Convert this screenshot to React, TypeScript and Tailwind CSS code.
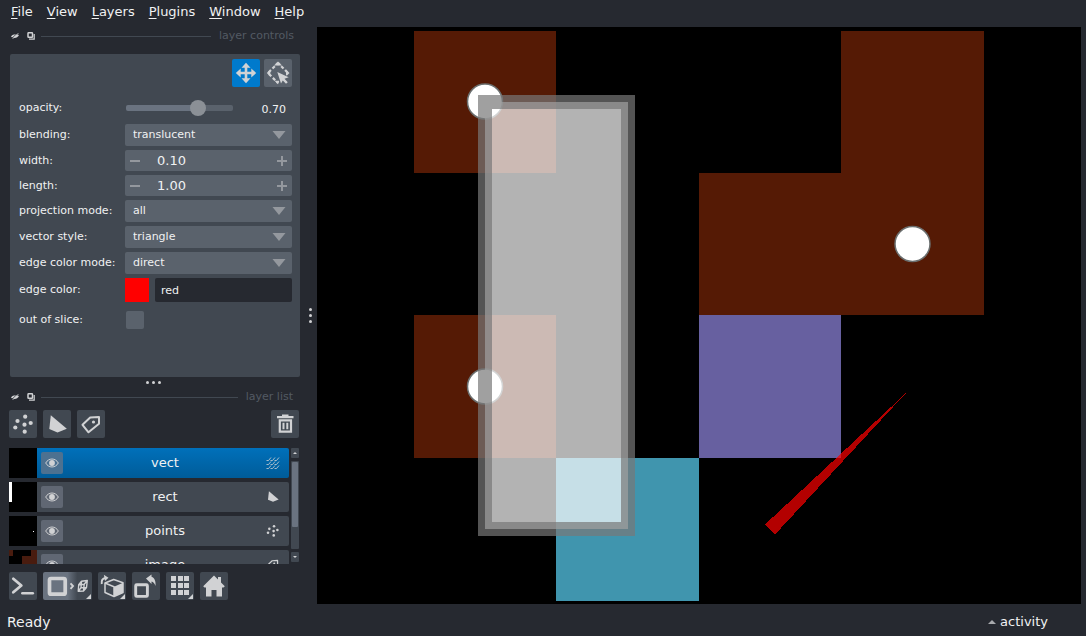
import { useState } from "react";
import type { ReactNode } from "react";

const INK = "#d1d2d4";

function Icon({ children, w = 28, h = 28 }: { children: ReactNode; w?: number; h?: number }) {
  return (
    <svg width={w} height={h} viewBox={`0 0 ${w} ${h}`} fill={INK} className="block shrink-0" aria-hidden="true">
      {children}
    </svg>
  );
}

function ToolButton({ label, className = "bg-[#414851]", children }: { label: string; className?: string; children: ReactNode }) {
  return (
    <button type="button" aria-label={label} className={`block h-7 shrink-0 rounded-[2px] ${className}`}>
      {children}
    </button>
  );
}

const Corner = () => <path d="M27 22v5h-5z" />;

function DockTitle({ title }: { title: string }) {
  return (
    <div className="flex items-center pr-[6px] pl-[2px] text-[11px] leading-[18px] text-[#535a63]">
      <button type="button" aria-label={`hide ${title}`}>
        <Icon w={8} h={8}>
          <path d="M0 4.500C1.500 2.200 5 1.400 8 3 6.500 6 2.800 7 0 4.500z" />
          <path d="M.7 6.500L6.500 1" stroke="#262930" strokeWidth=".8" />
          <path d="M1.500 7L7.500 1" stroke={INK} strokeWidth=".7" />
        </Icon>
      </button>
      <button type="button" aria-label={`float ${title}`} className="mr-[6px] ml-2">
        <Icon w={8} h={8}>
          <rect x="1" y=".8" width="4.500" height="4.500" rx=".6" fill="none" stroke={INK} strokeWidth="1.500" />
          <path d="M7.200 2v5.200H2" fill="none" stroke={INK} strokeWidth="1.200" />
        </Icon>
      </button>
      <span className="mr-2 h-px flex-1 bg-[#414851]" />
      <h2>{title}</h2>
    </div>
  );
}

function Row({ id, label, children, height = "" }: { id: string; label: string; children: ReactNode; height?: string }) {
  return (
    <div className={`flex items-center ${height}`}>
      <label htmlFor={id} className="w-[106px] shrink-0">
        {label}
      </label>
      {children}
    </div>
  );
}

function Select({ id, value }: { id: string; value: string }) {
  return (
    <div className="relative flex-1">
      <select id={id} defaultValue={value} className="block h-[22px] w-full appearance-none rounded-[2px] bg-[#5a626c] pr-6 pl-2">
        <option>{value}</option>
      </select>
      <svg width="14" height="8" viewBox="0 0 14 8" className="pointer-events-none absolute top-[7px] right-[6px]" aria-hidden="true">
        <path d="M.5 0h13L7 8z" fill="#94989e" />
      </svg>
    </div>
  );
}

function Spin({ id, initial }: { id: string; initial: number }) {
  const [value, setValue] = useState(initial);
  return (
    <div className="flex h-[21px] min-w-0 flex-1 items-center rounded-[2px] bg-[#5a626c]">
      <button type="button" aria-label="decrease" className="w-5 pl-[5px]" onClick={() => setValue(value - 0.1)}>
        <Icon w={10} h={10}>
          <path d="M0 4h10v2H0z" fill="#94989e" />
        </Icon>
      </button>
      <input
        id={id}
        value={value.toFixed(2)}
        onChange={(e) => setValue(Number(e.target.value) || 0)}
        className="min-w-0 flex-1 bg-transparent pl-3 text-[13px] leading-5 outline-none"
      />
      <button type="button" aria-label="increase" className="w-5 pl-[5px]" onClick={() => setValue(value + 0.1)}>
        <Icon w={10} h={10}>
          <path d="M0 4h4V0h2v4h4v2H6v4H4V6H0z" fill="#94989e" />
        </Icon>
      </button>
    </div>
  );
}

const PointDots = () => (
  <>
    <circle cx="16.200" cy="6.700" r="2.100" />
    <circle cx="8.500" cy="11" r="2.100" />
    <circle cx="21.700" cy="13" r="2.100" />
    <circle cx="15.500" cy="14.700" r="2.100" />
    <circle cx="6.300" cy="17.500" r="2.100" />
    <circle cx="15.700" cy="21.700" r="2.100" />
  </>
);

const Tag = () => (
  <>
    <path d="M5.500 14.800L13.200 7.500 22 7 22 13.800 11.500 22.300z" fill="none" stroke={INK} strokeWidth="2" strokeLinejoin="round" />
    <circle cx="16.500" cy="12" r="1.600" />
  </>
);

const PolyShape = () => <path d="M7.800 5.200L23.800 18.700 14.500 22.500 6.300 19z" />;

function Small({ children }: { children: ReactNode }) {
  return (
    <svg width="14" height="14" viewBox="3 3 23 23" fill={INK} className="block shrink-0" aria-hidden="true">
      {children}
    </svg>
  );
}

const layers = [
  {
    name: "vect",
    selected: true,
    thumb: null,
    icon: (
      <Icon w={14} h={14}>
        <path
          d="M.5 4.500h2L5 1.500M4.500 4.500h2L9 1.500M8.500 4.500h2L13 1.500M.5 8.500h2L5 5.500M4.500 8.500h2L9 5.500M8.500 8.500h2L13 5.500M.5 12.500h2L5 9.500M4.500 12.500h2L9 9.500M8.500 12.500h2L13 9.500"
          stroke={INK}
          strokeWidth=".8"
          fill="none"
        />
      </Icon>
    ),
  },
  { name: "rect", selected: false, thumb: <rect width="3" height="20" fill="#fff" />, icon: <Small><PolyShape /></Small> },
  { name: "points", selected: false, thumb: <rect x="24" y="15" width="1" height="1" fill="#fff" />, icon: <Small><PointDots /></Small> },
  { name: "image", selected: false, thumb: <path d="M0 0h4v6H0zM22 0h6v18H13V6h9z" fill="#491c0f" />, icon: <Small><Tag /></Small> },
];

function LayerItem({ layer }: { layer: (typeof layers)[number] }) {
  return (
    <li className="flex h-[30px] shrink-0">
      <svg width="28" height="30" viewBox="0 0 28 30" className="shrink-0 bg-black" aria-hidden="true">
        {layer.thumb}
      </svg>
      <div
        className={`flex flex-1 items-center rounded-r-[2px] pr-[9px] pl-1 ${
          layer.selected ? "bg-linear-to-b from-[#0070ba] to-[#005c99]" : "bg-[#414851]"
        }`}
      >
        <button
          type="button"
          aria-label={`toggle ${layer.name}`}
          className={`flex size-[22px] items-center justify-center rounded-[2px] ${layer.selected ? "bg-[#4d7190]" : "bg-[#606773]"}`}
        >
          <Icon w={14} h={10}>
            <path d="M.7 5C3.500-.3 10.500-.3 13.300 5 10.500 10.300 3.500 10.300.7 5z" fill="none" stroke={INK} strokeWidth="1" />
            <circle cx="7" cy="5" r="2.900" />
          </Icon>
        </button>
        <span className="flex-1 pl-px text-center text-[13px] leading-5">{layer.name}</span>
        {layer.icon}
      </div>
    </li>
  );
}

function Scene() {
  return (
    <svg viewBox="0 0 764 577" className="block h-full w-full" role="img" aria-label="canvas" shapeRendering="crispEdges">
      <path d="M97 4h142v142H97zM97 288h142v143H97zM524 4h143v284H382V146h142z" fill="#551a05" />
      <rect x="382" y="288" width="142" height="143" fill="#6760a0" />
      <rect x="239" y="431" width="143" height="143" fill="#4095ae" />
      <g fill="#fff" stroke="#6b6f6f" strokeWidth="1.500" shapeRendering="auto">
        <circle cx="168" cy="74.500" r="17.500" />
        <circle cx="595.500" cy="217" r="17.500" />
        <circle cx="168" cy="359.500" r="17.500" />
      </g>
      <rect x="168" y="75" width="143" height="427" fill="#fff" fillOpacity=".7" />
      <rect x="168" y="75" width="143" height="427" fill="none" stroke="#777" strokeOpacity=".7" strokeWidth="14" />
      <path d="M589 366L448 497.500 458 507.500z" fill="#f00" fillOpacity=".7" />
    </svg>
  );
}

export default function App() {
  const [opacity, setOpacity] = useState(0.7);
  return (
    <div className="flex h-screen flex-col overflow-hidden bg-[#262930] font-['DejaVu_Sans',sans-serif] text-[#f0f1f2]">
      <nav className="flex h-[27px] shrink-0 gap-[14px] px-[11px] text-[13px] leading-6">
        {["File", "View", "Layers", "Plugins", "Window", "Help"].map((m) => (
          <button type="button" key={m} className="h-6">
            <span className="underline underline-offset-2">{m[0]}</span>
            {m.slice(1)}
          </button>
        ))}
      </nav>

      <main className="flex min-h-0 flex-1">
        <aside className="flex w-[303px] shrink-0 flex-col pr-[3px] pl-[9px]">
          <section className="shrink-0">
            <DockTitle title="layer controls" />
            <form className="mt-[9px] ml-px flex flex-col gap-1 rounded-[2px] bg-[#414851] pt-[5px] pr-2 pb-[43px] pl-[9px] text-[11px] leading-[18px]">
              <div className="mb-1 flex justify-end gap-1">
                <ToolButton label="pan/zoom" className="bg-[#007acc]">
                  <Icon>
                    <path d="M14 7v14M7 14h14" stroke={INK} strokeWidth="2.600" />
                    <path d="M14 3.800l4.500 4.900h-9zM14 24.200l4.500-4.900h-9zM3.800 14l4.900-4.500v9zM24.200 14l-4.900-4.500v9z" />
                  </Icon>
                </ToolButton>
                <ToolButton label="transform" className="bg-[#5a626c]">
                  <Icon>
                    <path d="M14 4L24 14M14 4L4 14 14 24" fill="none" stroke={INK} strokeWidth="2.200" strokeDasharray="3.300 2.200" strokeDashoffset="1" />
                    <path d="M14 2.500l4 4h-8zM2.800 14l3.500-3.500v7zM25.500 14l-3.500-3.500v7zM14 25.300l-3.500-3.500h5z" />
                    <path d="M12.500 12L26 18l-5 2.200 3 3.300-2.500 2.200-3-3-2 3z" fill="#5a626c" />
                    <path d="M13.300 13L24.700 18.200 20.500 19.800 23.800 23.200 22 24.800 18.800 21.400 17 24.500z" />
                  </Icon>
                </ToolButton>
              </div>
              <Row id="opacity" label="opacity:" height="h-[25px]">
                <input
                  id="opacity"
                  type="range"
                  min="0"
                  max="1"
                  step="0.01"
                  value={opacity}
                  onChange={(e) => setOpacity(Number(e.target.value))}
                  className="mr-auto ml-px block h-[6px] w-[107px] appearance-none rounded-[2px] [&::-webkit-slider-thumb]:size-4 [&::-webkit-slider-thumb]:appearance-none [&::-webkit-slider-thumb]:rounded-full [&::-webkit-slider-thumb]:bg-[#8b9096]"
                  style={{ background: `linear-gradient(to right, #6a7380 ${opacity * 100}%, #5a626c ${opacity * 100}%)` }}
                />
                <output htmlFor="opacity" className="pt-[5px] pr-[6px]">
                  {opacity.toFixed(2)}
                </output>
              </Row>
              <Row id="blending" label="blending:">
                <Select id="blending" value="translucent" />
              </Row>
              <Row id="width" label="width:">
                <Spin id="width" initial={0.1} />
              </Row>
              <Row id="length" label="length:">
                <Spin id="length" initial={1} />
              </Row>
              <Row id="projection" label="projection mode:">
                <Select id="projection" value="all" />
              </Row>
              <Row id="style" label="vector style:">
                <Select id="style" value="triangle" />
              </Row>
              <Row id="mode" label="edge color mode:">
                <Select id="mode" value="direct" />
              </Row>
              <Row id="color" label="edge color:">
                <button type="button" aria-label="pick edge color" className="mr-[6px] size-6 shrink-0 bg-[#ff0000]" />
                <input id="color" defaultValue="red" className="h-6 min-w-0 flex-1 rounded-[2px] bg-[#262930] px-[6px]" />
              </Row>
              <Row id="slice" label="out of slice:" height="h-7">
                <input id="slice" type="checkbox" className="ml-px size-[18px] appearance-none rounded-[2px] bg-[#5a626c]" />
              </Row>
            </form>
          </section>

          <div className="flex h-[11px] shrink-0 items-center justify-center gap-[3px] pr-[2px]">
            <i className="size-[3px] rounded-full bg-[#d1d2d4]" />
            <i className="size-[3px] rounded-full bg-[#d1d2d4]" />
            <i className="size-[3px] rounded-full bg-[#d1d2d4]" />
          </div>

          <section className="flex min-h-0 flex-1 flex-col pr-px">
            <DockTitle title="layer list" />
            <div className="mt-1 flex gap-[6px]">
              <ToolButton label="new points layer">
                <Icon>
                  <PointDots />
                </Icon>
              </ToolButton>
              <ToolButton label="new shapes layer">
                <Icon>
                  <PolyShape />
                </Icon>
              </ToolButton>
              <ToolButton label="new labels layer">
                <Icon>
                  <Tag />
                </Icon>
              </ToolButton>
              <span className="flex-1" />
              <ToolButton label="delete layer">
                <Icon>
                  <path d="M6 6h5V4.500h6.500V6h5v2.200H6z" />
                  <path d="M8.800 10.400h11.200v11.200H8.800z" fill="none" stroke={INK} strokeWidth="2.200" />
                  <path d="M11.500 12.800h2v6.500h-2zM15.300 12.800h2v6.500h-2z" />
                </Icon>
              </ToolButton>
            </div>

            <div className="mt-[10px] flex min-h-0 flex-1 gap-[2px]">
              <ul className="flex min-h-0 flex-1 flex-col gap-1 overflow-hidden">
                {layers.map((l) => (
                  <LayerItem key={l.name} layer={l} />
                ))}
              </ul>
              <div className="flex w-2 flex-col pb-[2px]">
                <button type="button" aria-label="scroll up" className="flex h-[10px] items-center justify-center rounded-[1px] bg-[#414851]">
                  <Icon w={4} h={2}>
                    <path d="M0 2h4L2 0z" />
                  </Icon>
                </button>
                <div className="my-[3px] flex-1 rounded-[1px] bg-[#414851] p-px">
                  <div className="h-3/4 rounded-[1px] bg-[#6a7380]" />
                </div>
                <button type="button" aria-label="scroll down" className="flex h-[10px] items-center justify-center rounded-[1px] bg-[#414851]">
                  <Icon w={4} h={2}>
                    <path d="M0 0h4L2 2z" />
                  </Icon>
                </button>
              </div>
            </div>

            <div className="mt-2 mb-1 flex gap-[6px]">
              <ToolButton label="console">
                <Icon>
                  <path d="M4.300 6.800L12.300 13.500 4.300 20.300" fill="none" stroke={INK} strokeWidth="2.800" strokeLinecap="round" strokeLinejoin="round" />
                  <path d="M13.300 21.200h10.500" stroke={INK} strokeWidth="2.500" strokeLinecap="round" />
                </Icon>
              </ToolButton>
              <ToolButton label="toggle 2D/3D" className="bg-linear-to-r from-[#6a7380] from-50% to-[#414851] to-70%">
                <Icon w={49}>
                  <rect x="6.500" y="6.500" width="15.700" height="15.700" rx="1.500" fill="none" stroke={INK} strokeWidth="3.700" />
                  <path d="M27.500 11.300L30 14l-2.500 2.900" fill="none" stroke={INK} strokeWidth="1.900" />
                  <path
                    d="M38.500 9.200L44.300 8.500 43.500 15.500 40.500 19 35.200 19.300 35.700 12.700zM35.700 12.700L41.200 12.300 40.500 19M41.200 12.300L44.300 8.500M38.500 9.200L38 15.800 43.500 15.500M38 15.800L35.200 19.300"
                    fill="none"
                    stroke={INK}
                    strokeWidth="1.400"
                    strokeLinejoin="round"
                  />
                  <path d="M48 22v5h-5z" />
                </Icon>
              </ToolButton>
              <ToolButton label="roll dimensions">
                <Icon>
                  <path d="M7 11l8.700-3.500L25 10.700v9.800l-9 4-9-4z" fill="none" stroke={INK} strokeWidth="1.500" strokeLinejoin="round" />
                  <path d="M16 14.700L25 10.700v9.800l-9 4z" />
                  <path d="M7 11L16 14.700v9.800" stroke={INK} strokeWidth="1.500" fill="none" />
                  <path d="M3.800 12C3.200 8.500 4.500 6.300 7.500 6" fill="none" stroke={INK} strokeWidth="2" />
                  <path d="M5.800 2.800L10.500 5.800 7 9z" />
                  <Corner />
                </Icon>
              </ToolButton>
              <ToolButton label="transpose dimensions">
                <Icon>
                  <rect x="3.700" y="12.700" width="11.700" height="11.700" rx="1" fill="none" stroke={INK} strokeWidth="2.900" />
                  <path d="M14 6.500L19.500 2.500v2.200C22.800 6 24 9.500 23.500 14 22.500 11.500 21.500 10 19.500 9.500v2.500z" />
                </Icon>
              </ToolButton>
              <ToolButton label="grid mode">
                <Icon>
                  <path d="M5 4h5v5H5zM12 4h5v5h-5zM18 4h5v5h-5zM5 11h5v5H5zM12 11h5v5h-5zM18 11h5v5h-5zM5 18h5v5H5zM12 18h5v5h-5zM18 18h5v5h-5z" />
                  <Corner />
                </Icon>
              </ToolButton>
              <ToolButton label="home">
                <Icon>
                  <path d="M14 3.500l4 4V5h3v5.500l3.800 3.800L23.500 15.500H22V24.500h-5.500V18h-5v6.500H6v-9H4.500L3.200 14.300z" />
                </Icon>
              </ToolButton>
            </div>
          </section>
        </aside>

        <div className="flex w-[14px] shrink-0 flex-col items-center justify-center gap-[3px]">
          <i className="size-[3px] rounded-full bg-[#d1d2d4]" />
          <i className="size-[3px] rounded-full bg-[#d1d2d4]" />
          <i className="size-[3px] rounded-full bg-[#d1d2d4]" />
        </div>

        <div className="mr-[5px] min-w-0 flex-1 bg-black">
          <Scene />
        </div>
      </main>

      <footer className="flex h-8 shrink-0 items-center justify-between pt-1 pr-[38px] pl-[7px] leading-5">
        <span className="text-[14px]">Ready</span>
        <button type="button" className="flex items-center gap-1 text-[13px]">
          <Icon w={8} h={4}>
            <path d="M0 4h8L4 0z" fill="#a8aaad" />
          </Icon>
          activity
        </button>
      </footer>
    </div>
  );
}
